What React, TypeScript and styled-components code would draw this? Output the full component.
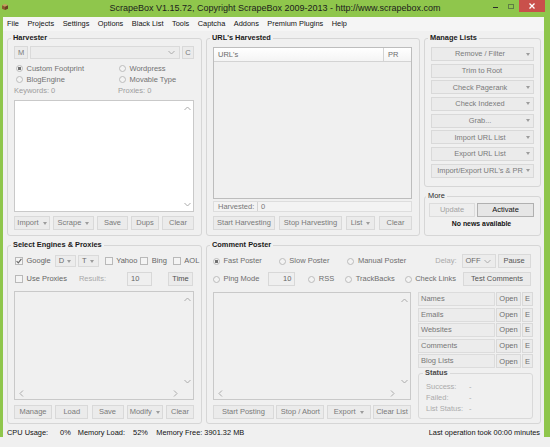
import React from "react";
import styled, { createGlobalStyle } from "styled-components";

const FONT = `"Liberation Sans", Arial, sans-serif`;

const GlobalStyle = createGlobalStyle`
  html, body { margin: 0; padding: 0; background: #f0f0f0; }
  body { font-family: ${FONT}; }
  * { box-sizing: border-box; }
`;

/* ---------- window chrome ---------- */
const Window = styled.div`
  width: 550px;
  height: 437px;
  background: #8fc64c;
  display: flex;
  flex-direction: column;
`;

const TitleBar = styled.div`
  height: 17px;
  flex: none;
  display: grid;
  grid-template-columns: 1fr auto 1fr;
  align-items: start;
`;

const IconCell = styled.div`
  padding: 4px 0 0 2px;
  display: flex;
`;

const TitleText = styled.div`
  font: 9px/17px ${FONT};
  color: #1c1c1c;
  white-space: nowrap;
`;

const WinButtons = styled.div`
  justify-self: end;
  display: flex;
  padding-right: 5px;
`;

const WinBtn = styled.div<{ $w: number; $close?: boolean }>`
  width: ${(p) => p.$w}px;
  height: 12px;
  display: flex;
  align-items: center;
  justify-content: center;
  background: ${(p) => (p.$close ? "#c9504b" : "transparent")};
`;

const MinGlyph = styled.span`
  width: 5px;
  height: 1px;
  margin-top: 2px;
  background: #2b2b2b;
`;

const MaxGlyph = styled.span`
  width: 6px;
  height: 5px;
  border: 1px solid #5f7f45;
`;

const Client = styled.div`
  flex: 1;
  margin: 0 6px 0 3px;
  background: #f0f0f0;
  display: flex;
  flex-direction: column;
`;

const MenuBar = styled.div`
  height: 14px;
  flex: none;
  background: #f5f5f5;
  display: flex;
  align-items: center;
  gap: 8.5px;
  padding-left: 4px;
`;

const MenuItem = styled.span`
  font: 7.4px/14px ${FONT};
  color: #111;
  white-space: nowrap;
`;

const Main = styled.div`
  flex: none;
  padding: 2px 0 0 4px;
`;

const TopRow = styled.div`
  display: grid;
  grid-template-columns: 195px 214px 117px;
  column-gap: 4px;
  height: 203px;
`;

const BottomRow = styled.div`
  display: grid;
  grid-template-columns: 195px 335px;
  column-gap: 4px;
  height: 184px;
  margin-top: 4px;
`;

const RightStack = styled.div`
  display: flex;
  flex-direction: column;
  gap: 4px;
`;

const StatusBar = styled.div`
  height: 13px;
  flex: none;
  padding: 4px 4px 0 4px;
  display: flex;
  font: 7.4px/9px ${FONT};
  color: #111;
  white-space: nowrap;
`;

const StatusItem = styled.span<{ $ml?: number }>`
  margin-left: ${(p) => p.$ml ?? 0}px;
`;

const StatusRight = styled.span`
  margin-left: auto;
`;

/* ---------- group boxes ---------- */
const Group = styled.fieldset<{ $pl?: number; $pr?: number; $pb?: number; $h?: number; $border?: string }>`
  margin: 0;
  min-width: 0;
  min-height: 0;
  height: ${(p) => (p.$h ? `${p.$h}px` : "100%")};
  flex: ${(p) => (p.$h ? "none" : "1 1 auto")};
  border: 1px solid ${(p) => p.$border ?? "#d6d6d6"};
  border-radius: 3px;
  padding: 0 ${(p) => p.$pr ?? 7}px ${(p) => p.$pb ?? 4}px ${(p) => p.$pl ?? 6}px;
  display: flex;
  flex-direction: column;
`;

const Legend = styled.legend<{ $color?: string; $weight?: string }>`
  padding: 0 2px;
  margin-left: -3px;
  font: ${(p) => p.$weight ?? "bold"} 7.4px/10px ${FONT};
  color: ${(p) => p.$color ?? "#1a1a1a"};
  white-space: nowrap;
`;

/* ---------- controls ---------- */
const Row = styled.div<{ $mt?: number; $h?: number }>`
  flex: none;
  display: flex;
  align-items: center;
  margin-top: ${(p) => p.$mt ?? 0}px;
  height: ${(p) => p.$h ?? 12}px;
`;

const ButtonRow = styled.div<{ $mt?: number }>`
  flex: none;
  display: flex;
  justify-content: space-between;
  margin-top: ${(p) => p.$mt ?? 4}px;
  height: 14px;
`;

const Btn = styled.button<{ $w?: number; $ml?: number; $color?: string; $h?: number }>`
  flex: ${(p) => (p.$w ? `0 0 ${p.$w}px` : "1 1 0")};
  width: ${(p) => (p.$w ? `${p.$w}px` : "auto")};
  height: ${(p) => p.$h ?? 14}px;
  margin: 0 0 0 ${(p) => p.$ml ?? 0}px;
  padding: 0 2px;
  display: flex;
  align-items: center;
  justify-content: center;
  gap: 4px;
  font: 7.5px/1 ${FONT};
  color: ${(p) => p.$color ?? "#7a7a7a"};
  background: #ebebeb;
  border: 1px solid #d9d9d9;
  border-radius: 0;
  white-space: nowrap;
`;

const ActiveBtn = styled(Btn)`
  color: #111;
  background: #e6e6e6;
  border-color: #b0b0b0;
`;

const DimBtn = styled(Btn)`
  color: #a3a3a3;
  background: #eeeeee;
  border-color: #dcdcdc;
`;

const ListBtn = styled.button`
  flex: none;
  height: 14px;
  margin: 0;
  padding: 0 3px 0 2px;
  display: flex;
  align-items: center;
  font: 7.4px/1 ${FONT};
  color: #7a7a7a;
  background: #ebebeb;
  border: 1px solid #d9d9d9;
  border-radius: 0;
  white-space: nowrap;
`;

const ListLabel = styled.span`
  flex: 1;
  text-align: center;
`;

const ListStack = styled.div`
  margin-top: 4px;
  display: flex;
  flex-direction: column;
  gap: 2.67px;
`;

const Caret = styled.span<{ $c?: string }>`
  flex: none;
  width: 0;
  height: 0;
  border-left: 2.5px solid transparent;
  border-right: 2.5px solid transparent;
  border-top: 3px solid ${(p) => p.$c ?? "#9c9c9c"};
`;

const Combo = styled.div<{ $ml?: number; $w?: number; $h?: number; $justify?: string }>`
  flex: ${(p) => (p.$w ? `0 0 ${p.$w}px` : "1 1 auto")};
  height: ${(p) => p.$h ?? 13}px;
  margin-left: ${(p) => p.$ml ?? 0}px;
  border: 1px solid #dadada;
  background: #ececec;
  display: flex;
  align-items: center;
  justify-content: ${(p) => p.$justify ?? "flex-end"};
  gap: 3px;
  padding: 0 4px 0 3px;
  font: 7.5px/1 ${FONT};
  color: #6a6a6a;
`;

const Field = styled.div<{ $ml?: number; $w: number; $align?: string }>`
  flex: 0 0 ${(p) => p.$w}px;
  height: 14px;
  margin-left: ${(p) => p.$ml ?? 0}px;
  border: 1px solid #d8d8d8;
  background: #efefef;
  display: flex;
  align-items: center;
  justify-content: ${(p) => p.$align ?? "flex-start"};
  padding: 0 3px;
  font: 7.5px/1 ${FONT};
  color: #666;
`;

const Option = styled.span<{ $ml?: number; $color?: string; $pl?: number }>`
  display: inline-flex;
  align-items: center;
  gap: 3.5px;
  margin-left: ${(p) => p.$ml ?? 0}px;
  padding-left: ${(p) => p.$pl ?? 0}px;
  font: 7.5px/1 ${FONT};
  color: ${(p) => p.$color ?? "#727272"};
  white-space: nowrap;
`;

const Radio = styled.span<{ $on?: boolean }>`
  flex: none;
  width: 7px;
  height: 7px;
  border-radius: 50%;
  border: 1px solid #bcbcbc;
  background: ${(p) =>
    p.$on ? "radial-gradient(circle, #707070 0 1.4px, #f3f3f3 1.9px)" : "#f3f3f3"};
`;

const CheckBox = styled.span`
  flex: none;
  width: 8px;
  height: 8px;
  border: 1px solid #b9b9b9;
  background: #f4f4f4;
  display: flex;
  align-items: center;
  justify-content: center;
`;

const Hint = styled.span<{ $ml?: number; $color?: string }>`
  margin-left: ${(p) => p.$ml ?? 0}px;
  font: 7.5px/1 ${FONT};
  color: ${(p) => p.$color ?? "#9d9d9d"};
  white-space: nowrap;
`;

const OptionGrid = styled.div`
  flex: none;
  margin-top: 4px;
  display: grid;
  grid-template-columns: 104px 1fr;
  grid-auto-rows: 11px;
  align-items: center;
`;

/* ---------- scroll boxes ---------- */
const ScrollFrame = styled.div<{ $bg: string; $hbar?: boolean; $mt?: number; $border?: string }>`
  flex: 1 1 auto;
  min-height: 0;
  margin-top: ${(p) => p.$mt ?? 0}px;
  border: 1px solid ${(p) => p.$border ?? "#c9c9c9"};
  background: ${(p) => p.$bg};
  display: grid;
  grid-template-columns: 1fr 11px;
  grid-template-rows: ${(p) => (p.$hbar ? "1fr 11px" : "1fr")};
`;

const VBar = styled.div`
  grid-column: 2;
  grid-row: 1;
  display: flex;
  flex-direction: column;
  align-items: center;
  justify-content: space-between;
  padding: 5px 0 4px;
`;

const HBar = styled.div`
  grid-column: 1;
  grid-row: 2;
  display: flex;
  align-items: center;
  justify-content: space-between;
  padding: 0 4px;
`;

const Chevron = ({ dir, color = "#ababab" }: { dir: "up" | "down" | "left" | "right"; color?: string }) => {
  const vertical = dir === "up" || dir === "down";
  const pts = {
    up: "0.5,4 3.5,1 6.5,4",
    down: "0.5,1 3.5,4 6.5,1",
    left: "4,0.5 1,3.5 4,6.5",
    right: "1,0.5 4,3.5 1,6.5",
  }[dir];
  return (
    <svg width={vertical ? 7 : 5} height={vertical ? 5 : 7} viewBox={vertical ? "0 0 7 5" : "0 0 5 7"}>
      <polyline points={pts} fill="none" stroke={color} strokeWidth="1" />
    </svg>
  );
};

const Check = () => (
  <svg width="6" height="6" viewBox="0 0 6 6">
    <polyline points="0.6,3.2 2.3,4.9 5.4,0.8" fill="none" stroke="#666" strokeWidth="1.1" />
  </svg>
);

const ScrollBox = ({ bg, hbar, mt, border }: { bg: string; hbar?: boolean; mt?: number; border?: string }) => (
  <ScrollFrame $bg={bg} $hbar={hbar} $mt={mt} $border={border}>
    <VBar>
      <Chevron dir="up" />
      <Chevron dir="down" />
    </VBar>
    {hbar && (
      <HBar>
        <Chevron dir="left" />
        <Chevron dir="right" />
      </HBar>
    )}
  </ScrollFrame>
);

/* ---------- URL list ---------- */
const ListView = styled.div`
  flex: 1 1 auto;
  min-height: 0;
  margin-top: 4px;
  border: 1px solid #bdbdbd;
  display: flex;
  flex-direction: column;
  background: #f0f0f0;
`;

const ListHeader = styled.div`
  flex: none;
  height: 14px;
  display: grid;
  grid-template-columns: 1fr 28px;
  background: linear-gradient(#ffffff, #f4f4f4);
  border-bottom: 1px solid #d3d3d3;
`;

const HeaderCell = styled.div<{ $divider?: boolean }>`
  display: flex;
  align-items: center;
  padding-left: 4px;
  font: 7.5px/1 ${FONT};
  color: #6c6c6c;
  border-left: ${(p) => (p.$divider ? "1px solid #d3d3d3" : "none")};
`;

const CountBar = styled.div`
  flex: none;
  margin-top: 2px;
  height: 11px;
  border: 1px solid #dddddd;
  background: #f3f3f3;
  display: flex;
  font: 7.5px/9px ${FONT};
  color: #777;
`;

const CountLabel = styled.span`
  width: 44px;
  padding-left: 4px;
  border-right: 1px solid #d3d3d3;
`;

const CountValue = styled.span`
  padding-left: 3px;
`;

/* ---------- More ---------- */
const NewsText = styled.div`
  margin-top: 2px;
  text-align: center;
  font: bold 6.9px/10px ${FONT};
  color: #111;
  white-space: nowrap;
`;

/* ---------- comment poster bottom ---------- */
const PosterBody = styled.div`
  flex: 1 1 auto;
  min-height: 0;
  margin-top: 6px;
  display: grid;
  grid-template-columns: 198px 1fr;
  column-gap: 7px;
`;

const Column = styled.div`
  min-height: 0;
  display: flex;
  flex-direction: column;
`;

const FileRows = styled.div`
  flex: none;
  display: flex;
  flex-direction: column;
  gap: 1.6px;
`;

const FileRow = styled.div`
  height: 14px;
  display: grid;
  grid-template-columns: 1fr 25px 11px;
  column-gap: 1px;
`;

const FileLabel = styled.div`
  border: 1px solid #dcdcdc;
  background: #ececec;
  padding: 2px 0 0 2px;
  font: 7.5px/1 ${FONT};
  color: #777;
`;

const StatusGrid = styled.div`
  margin-top: 3px;
  display: grid;
  grid-template-columns: 43px 1fr;
  grid-auto-rows: 11px;
  align-items: center;
  font: 7.5px/1 ${FONT};
  color: #ababab;
`;

const AppIcon = () => (
  <svg width="6" height="6" viewBox="0 0 7 7">
    <polygon points="3.5,0 7,1.6 3.5,3.2 0,1.6" fill="#c99a62" />
    <polygon points="0,1.6 3.5,3.2 3.5,7 0,5.4" fill="#8a5a2e" />
    <polygon points="7,1.6 3.5,3.2 3.5,7 7,5.4" fill="#6a4222" />
  </svg>
);

const CloseGlyph = () => (
  <svg width="6" height="6" viewBox="0 0 6 6">
    <path d="M0.5 0.5 L5.5 5.5 M5.5 0.5 L0.5 5.5" stroke="#fff" strokeWidth="1.3" />
  </svg>
);

const menus = ["File", "Projects", "Settings", "Options", "Black List", "Tools", "Captcha", "Addons", "Premium Plugins", "Help"];

const manageItems: [string, boolean][] = [
  ["Remove / Filter", true],
  ["Trim to Root", false],
  ["Check Pagerank", true],
  ["Check Indexed", true],
  ["Grab...", true],
  ["Import URL List", true],
  ["Export URL List", true],
  ["Import/Export URL's & PR", true],
];

const fileLists = ["Names", "Emails", "Websites", "Comments", "Blog Lists"];

export default function App() {
  return (
    <>
      <GlobalStyle />
      <Window>
        <TitleBar>
          <IconCell>
            <AppIcon />
          </IconCell>
          <TitleText>ScrapeBox V1.15.72, Copyright ScrapeBox 2009-2013 - http://www.scrapebox.com</TitleText>
          <WinButtons>
            <WinBtn $w={16}>
              <MinGlyph />
            </WinBtn>
            <WinBtn $w={16}>
              <MaxGlyph />
            </WinBtn>
            <WinBtn $w={26} $close>
              <CloseGlyph />
            </WinBtn>
          </WinButtons>
        </TitleBar>
        <Client>
          <MenuBar>
            {menus.map((m) => (
              <MenuItem key={m}>{m}</MenuItem>
            ))}
          </MenuBar>
          <Main>
            <TopRow>
              <Group $pb={5}>
                <Legend>Harvester</Legend>
                <Row $mt={3} $h={13}>
                  <Btn $w={14} $h={13}>M</Btn>
                  <Combo $ml={2}>
                    <Chevron dir="down" />
                  </Combo>
                  <Btn $w={12} $h={13} $ml={2}>C</Btn>
                </Row>
                <OptionGrid>
                  <Option $pl={2}>
                    <Radio $on />
                    Custom Footprint
                  </Option>
                  <Option $pl={1}>
                    <Radio />
                    Wordpress
                  </Option>
                  <Option $pl={2}>
                    <Radio />
                    BlogEngine
                  </Option>
                  <Option $pl={1}>
                    <Radio />
                    Movable Type
                  </Option>
                  <Hint>Keywords: 0</Hint>
                  <Hint>Proxies: 0</Hint>
                </OptionGrid>
                <ScrollBox bg="#ffffff" mt={4} />
                <ButtonRow $mt={4}>
                  <Btn $w={36}>
                    Import <Caret />
                  </Btn>
                  <Btn $w={41}>
                    Scrape <Caret />
                  </Btn>
                  <Btn $w={31}>Save</Btn>
                  <Btn $w={28}>Dups</Btn>
                  <Btn $w={32}>Clear</Btn>
                </ButtonRow>
              </Group>

              <Group $pb={5}>
                <Legend>URL's Harvested</Legend>
                <ListView>
                  <ListHeader>
                    <HeaderCell>URL's</HeaderCell>
                    <HeaderCell $divider>PR</HeaderCell>
                  </ListHeader>
                </ListView>
                <CountBar>
                  <CountLabel>Harvested:</CountLabel>
                  <CountValue>0</CountValue>
                </CountBar>
                <ButtonRow $mt={4}>
                  <Btn $w={62}>Start Harvesting</Btn>
                  <Btn $w={63}>Stop Harvesting</Btn>
                  <Btn $w={29}>
                    List <Caret />
                  </Btn>
                  <Btn $w={33}>Clear</Btn>
                </ButtonRow>
              </Group>

              <RightStack>
                <Group $h={154} $pr={6}>
                  <Legend>Manage Lists</Legend>
                  <ListStack>
                    {manageItems.map(([label, arrow]) => (
                      <ListBtn key={label}>
                        <ListLabel>{label}</ListLabel>
                        {arrow && <Caret />}
                      </ListBtn>
                    ))}
                  </ListStack>
                </Group>
                <Group $h={45} $pl={4} $pr={6}>
                  <Legend $weight="normal" $color="#2a2a2a">
                    More
                  </Legend>
                  <Row $mt={2} $h={14}>
                    <DimBtn $w={46}>Update</DimBtn>
                    <ActiveBtn $ml={2}>Activate</ActiveBtn>
                  </Row>
                  <NewsText>No news available</NewsText>
                </Group>
              </RightStack>
            </TopRow>

            <BottomRow>
              <Group $pb={4}>
                <Legend>Select Engines &amp; Proxies</Legend>
                <Row $mt={5} $h={12}>
                  <Option $pl={1} $color="#666">
                    <CheckBox>
                      <Check />
                    </CheckBox>
                    Google
                  </Option>
                  <Combo $w={17} $h={12} $ml={4} $justify="flex-start">
                    D <Caret />
                  </Combo>
                  <Combo $w={20} $h={12} $ml={2} $justify="flex-start">
                    T <Caret />
                  </Combo>
                  <Option $ml={6} $color="#666">
                    <CheckBox />
                    Yahoo
                  </Option>
                  <Option $ml={3} $color="#666">
                    <CheckBox />
                    Bing
                  </Option>
                  <Option $ml={6} $color="#666">
                    <CheckBox />
                    AOL
                  </Option>
                </Row>
                <Row $mt={5} $h={14}>
                  <Option $pl={1} $color="#666">
                    <CheckBox />
                    Use Proxies
                  </Option>
                  <Hint $ml={12} $color="#a9a9a9">
                    Results:
                  </Hint>
                  <Field $w={25} $ml={21}>
                    10
                  </Field>
                  <Btn $w={25} $ml={16} $color="#4f4f4f">
                    Time
                  </Btn>
                </Row>
                <ScrollBox bg="#f0f0f0" hbar mt={5} />
                <ButtonRow $mt={5}>
                  <Btn $w={38}>Manage</Btn>
                  <Btn $w={33}>Load</Btn>
                  <Btn $w={32}>Save</Btn>
                  <Btn $w={36}>
                    Modify <Caret />
                  </Btn>
                  <Btn $w={28}>Clear</Btn>
                </ButtonRow>
              </Group>

              <Group $pb={4}>
                <Legend>Comment Poster</Legend>
                <Row $mt={4} $h={14}>
                  <Option $color="#6e6e6e">
                    <Radio $on />
                    Fast Poster
                  </Option>
                  <Option $ml={17} $color="#6e6e6e">
                    <Radio />
                    Slow Poster
                  </Option>
                  <Option $ml={18} $color="#6e6e6e">
                    <Radio />
                    Manual Poster
                  </Option>
                  <Hint $ml={29} $color="#a9a9a9">
                    Delay:
                  </Hint>
                  <Combo $w={34} $h={14} $ml={5} $justify="space-between">
                    OFF <Chevron dir="down" />
                  </Combo>
                  <Btn $w={33} $ml={2} $color="#555">
                    Pause
                  </Btn>
                </Row>
                <Row $mt={4} $h={14}>
                  <Option $color="#6e6e6e">
                    <Radio />
                    Ping Mode
                  </Option>
                  <Field $w={27} $ml={9} $align="flex-end">
                    10
                  </Field>
                  <Option $ml={13} $color="#6e6e6e">
                    <Radio />
                    RSS
                  </Option>
                  <Option $ml={11} $color="#6e6e6e">
                    <Radio />
                    TrackBacks
                  </Option>
                  <Option $ml={10} $color="#6e6e6e">
                    <Radio />
                    Check Links
                  </Option>
                  <Btn $w={68} $ml={7} $color="#555">
                    Test Comments
                  </Btn>
                </Row>
                <PosterBody>
                  <Column>
                    <ScrollBox bg="#f0f0f0" hbar />
                    <ButtonRow $mt={5}>
                      <Btn $w={61}>Start Posting</Btn>
                      <Btn $w={48}>Stop / Abort</Btn>
                      <Btn $w={44}>
                        Export <Caret />
                      </Btn>
                      <Btn $w={38}>Clear List</Btn>
                    </ButtonRow>
                  </Column>
                  <Column>
                    <FileRows>
                      {fileLists.map((f) => (
                        <FileRow key={f}>
                          <FileLabel>{f}</FileLabel>
                          <Btn $w={25} $color="#6e6e6e">
                            Open
                          </Btn>
                          <Btn $w={11} $color="#6e6e6e">
                            E
                          </Btn>
                        </FileRow>
                      ))}
                    </FileRows>
                    <Group $pl={7} $pb={3} $border="#d9d9d9">
                      <Legend $color="#4a4a4a">Status</Legend>
                      <StatusGrid>
                        <span>Success:</span>
                        <span>-</span>
                        <span>Failed:</span>
                        <span>-</span>
                        <span>List Status:</span>
                        <span>-</span>
                      </StatusGrid>
                    </Group>
                  </Column>
                </PosterBody>
              </Group>
            </BottomRow>
          </Main>
          <StatusBar>
            <StatusItem>CPU Usage:</StatusItem>
            <StatusItem $ml={12}>0%</StatusItem>
            <StatusItem $ml={7}>Memory Load:</StatusItem>
            <StatusItem $ml={8}>52%</StatusItem>
            <StatusItem $ml={8.5}>Memory Free: 3901.32 MB</StatusItem>
            <StatusRight>Last operation took 00:00 minutes</StatusRight>
          </StatusBar>
        </Client>
      </Window>
    </>
  );
}
